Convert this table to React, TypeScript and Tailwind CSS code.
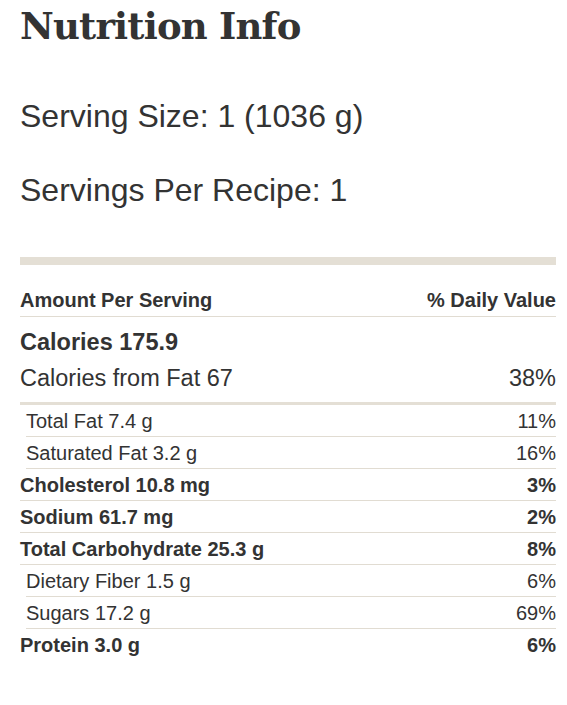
import React from "react";

type Row = { label: string; value: string; bold?: boolean; indent?: boolean };

const rows: Row[] = [
  { label: "Total Fat 7.4 g", value: "11%", indent: true },
  { label: "Saturated Fat 3.2 g", value: "16%", indent: true },
  { label: "Cholesterol 10.8 mg", value: "3%", bold: true },
  { label: "Sodium 61.7 mg", value: "2%", bold: true },
  { label: "Total Carbohydrate 25.3 g", value: "8%", bold: true },
  { label: "Dietary Fiber 1.5 g", value: "6%", indent: true },
  { label: "Sugars 17.2 g", value: "69%", indent: true },
  { label: "Protein 3.0 g", value: "6%", bold: true },
];

const App = () => {
  return (
    <div className="min-h-[705px] bg-white text-[#333333] font-['Liberation_Sans',Arial,sans-serif]">
      <div className="ml-[20px] w-[536px]">
        <h1 className="font-['DejaVu_Serif',serif] font-bold text-[37px] leading-[52px] tracking-[-0.8px] text-[#333333]">
          Nutrition Info
        </h1>

        <p className="mt-[46px] text-[32px] leading-[36px]">Serving Size: 1 (1036 g)</p>
        <p className="mt-[38px] text-[32px] leading-[36px]">Servings Per Recipe: 1</p>

        <div className="mt-[49px] h-[8px] bg-[#e4dfd5]" />

        <div className="mt-[23px] flex justify-between border-b border-[#e1dcd2] pb-[4px] text-[20px] font-bold leading-[24px]">
          <span>Amount Per Serving</span>
          <span>% Daily Value</span>
        </div>

        <div className="mt-[11px] text-[23.5px] font-bold leading-[28px]">Calories 175.9</div>
        <div className="mt-[8px] flex justify-between text-[23.5px] leading-[28px]">
          <span>Calories from Fat 67</span>
          <span>38%</span>
        </div>

        <div className="mt-[10px] h-[3px] bg-[#e4dfd5]" />

        <div>
          {rows.map((r, i) => (
            <div
              key={r.label}
              className={
                "flex h-[32px] items-center justify-between text-[20px] leading-[24px] " +
                (r.indent ? "ml-[6px] " : "") +
                (r.bold ? "font-bold " : "") +
                (i < rows.length - 1 ? "border-b border-[#e1dcd2]" : "")
              }
            >
              <span>{r.label}</span>
              <span>{r.value}</span>
            </div>
          ))}
        </div>
      </div>
    </div>
  );
};

export default App;
